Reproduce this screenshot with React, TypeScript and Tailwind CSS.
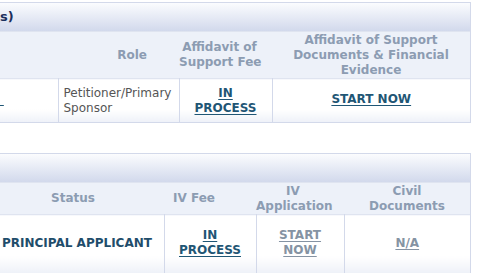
export default function App() {
  const font = { fontFamily: '"DejaVu Sans", Verdana, sans-serif' };
  const th = 'font-bold text-[12px] leading-[15px] text-[#8c9cb2] align-middle whitespace-nowrap';
  const td = 'align-middle text-[12px] leading-[15px] bg-gradient-to-b from-white from-70% to-[#eef1f8] border-b border-[#d3d9ea]';
  const link = 'font-bold text-[#1f5675] underline underline-offset-2';
  const grayLink = 'font-bold text-[#8593a3] underline underline-offset-2';

  return (
    <div className="w-[481px] h-[273px] bg-white overflow-hidden pt-[2px]" style={font}>
      {/* Sponsor panel */}
      <div className="w-[471px] border-t border-r border-[#d3d9ea]">
        <div className="h-[28px] bg-gradient-to-b from-[#fbfcfe] to-[#d2d9ec] flex items-center">
          <span className="text-[13px] font-bold text-[#1c2f5c]">s)</span>
        </div>
        <table className="w-[470px] table-fixed border-collapse">
          <colgroup>
            <col className="w-[58px]" />
            <col className="w-[121px]" />
            <col className="w-[93px]" />
            <col className="w-[198px]" />
          </colgroup>
          <thead>
            <tr className="h-[47px] bg-[#edf1f9] border-t border-b border-[#dfe4f0]">
              <th></th>
              <th className={`${th} text-right pr-[32px]`}>Role</th>
              <th className={`${th} text-center pr-[12px]`}>
                Affidavit of
                <br />
                Support Fee
              </th>
              <th className={`${th} text-center`}>
                Affidavit of Support
                <br />
                Documents &amp; Financial
                <br />
                Evidence
              </th>
            </tr>
          </thead>
          <tbody>
            <tr className="h-[44px]">
              <td className={`${td} border-r`}>
                <span className="inline-block w-[4px] text-[#1f5675] underline">&nbsp;</span>
              </td>
              <td className={`${td} border-r pl-[5px] text-[#555]`}>
                Petitioner/Primary
                <br />
                Sponsor
              </td>
              <td className={`${td} border-r text-center`}>
                <span className={link}>
                  IN
                  <br />
                  PROCESS
                </span>
              </td>
              <td className={`${td} text-center pb-[2px]`}>
                <span className={link}>START NOW</span>
              </td>
            </tr>
          </tbody>
        </table>
      </div>

      {/* Applicant panel */}
      <div className="w-[471px] mt-[30px] border-t border-r border-[#d3d9ea]">
        <div className="h-[28px] bg-gradient-to-b from-[#fbfcfe] to-[#d2d9ec]"></div>
        <table className="w-[470px] table-fixed border-collapse">
          <colgroup>
            <col className="w-[164px]" />
            <col className="w-[92px]" />
            <col className="w-[88px]" />
            <col className="w-[126px]" />
          </colgroup>
          <thead>
            <tr className="h-[32px] bg-[#edf1f9] border-t border-b border-[#dfe4f0]">
              <th className={`${th} text-center pr-[18px]`}>Status</th>
              <th className={`${th} text-left pl-[9px]`}>IV Fee</th>
              <th className={`${th} text-center pr-[14px]`}>
                IV
                <br />
                Application
              </th>
              <th className={`${th} text-center`}>
                Civil
                <br />
                Documents
              </th>
            </tr>
          </thead>
          <tbody>
            <tr className="h-[59px]">
              <td className={`${td} border-r pl-[2px] pb-[2px] font-bold text-[#1f4d6b] whitespace-nowrap`}>
                PRINCIPAL APPLICANT
              </td>
              <td className={`${td} border-r text-center pb-[2px]`}>
                <span className={link}>
                  IN
                  <br />
                  PROCESS
                </span>
              </td>
              <td className={`${td} border-r text-center pb-[2px]`}>
                <span className={grayLink}>
                  START
                  <br />
                  NOW
                </span>
              </td>
              <td className={`${td} text-center pb-[2px]`}>
                <span className={grayLink}>N/A</span>
              </td>
            </tr>
          </tbody>
        </table>
      </div>
    </div>
  );
}
